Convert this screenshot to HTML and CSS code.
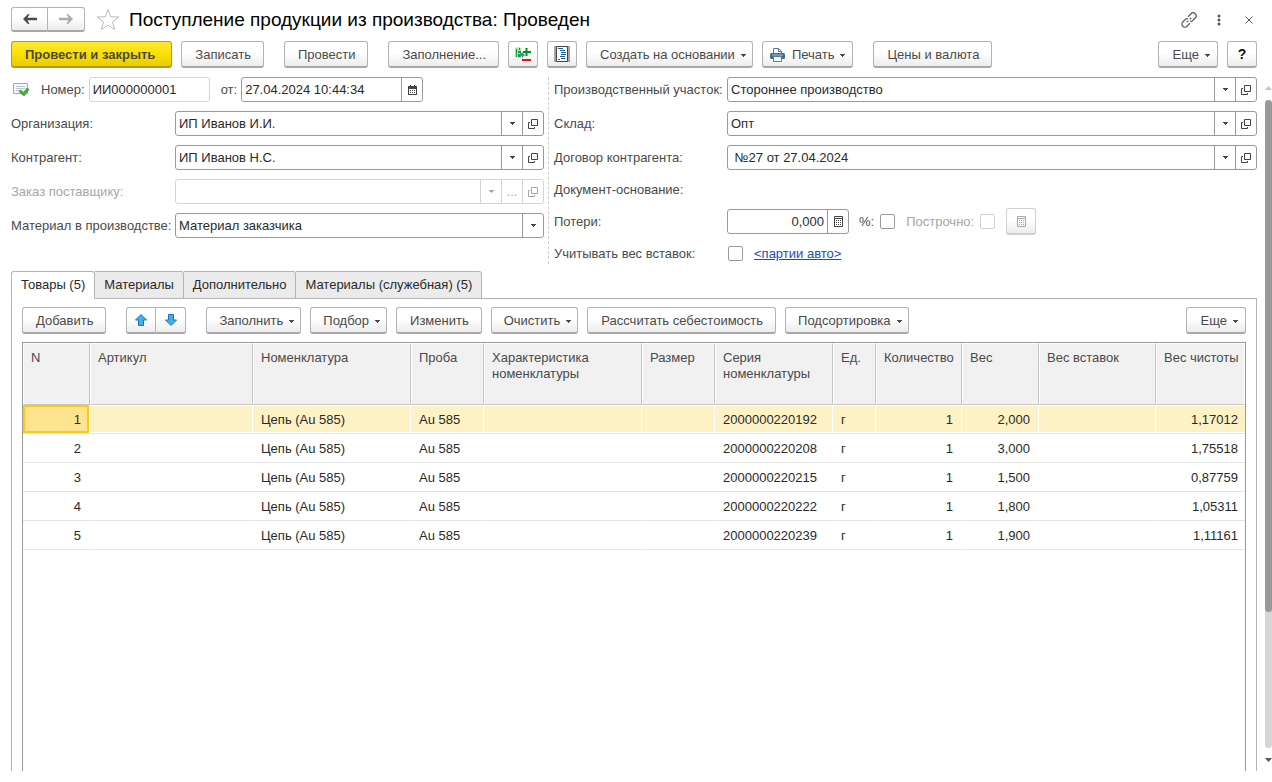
FILE: index.html
```html
<!DOCTYPE html>
<html lang="ru">
<head>
<meta charset="utf-8">
<title>Поступление продукции из производства</title>
<link rel="stylesheet" href="styles.css">
</head>
<body>
<svg class="defs" aria-hidden="true">
  <symbol id="open" viewBox="0 0 10 10"><path d="M3.500.5h6v6h-6zM2 3.500H.5v6h6V8" fill="none" stroke="currentColor"/></symbol>
  <symbol id="caret" viewBox="0 0 5 3"><path d="M0 0h5v1H4v1H3v1H2V2H1V1H0z" fill="currentColor"/></symbol>
  <symbol id="calc" viewBox="0 0 9 11"><path d="M.5.5h8v10h-8zM0 2.500h9" fill="none" stroke="currentColor"/><path d="M2 4h1v1H2zM4 4h1v1H4zM6 4h1v1H6zM2 6h1v1H2zM4 6h1v1H4zM6 6h1v1H6zM2 8h1v1H2zM4 8h1v1H4zM6 8h1v1H6z" fill="currentColor"/></symbol>
</svg>
<div class="window">
<main class="page">
  <header class="titlebar">
    <div class="pair nav">
      <button class="btn" aria-label="Назад"><svg width="14" height="10" viewBox="0 0 14 10"><path d="M0 5l5-5h1.500L4.500 3.800H14v2.400H4.500L6.500 10H5z" fill="#4a4a4a"/></svg></button>
      <button class="btn" aria-label="Вперед"><svg width="14" height="10" viewBox="0 0 14 10"><path d="M14 5L9 0H7.500l2 3.800H0v2.400h9.500l-2 3.800H9z" fill="#aaa"/></svg></button>
    </div>
    <button class="plain star" aria-label="В избранное"><svg width="24" height="23" viewBox="0 0 24 23"><path d="M12 1.500l2.700 7.300 8 .2-6.200 4.900 2.200 7.600-6.700-4.400-6.700 4.400 2.200-7.600L1.300 9l8-.2z" fill="none" stroke="#b4bcc4"/></svg></button>
    <h1>Поступление продукции из производства: Проведен</h1>
    <div class="wintools">
      <button class="plain" aria-label="Ссылка"><svg width="16" height="16" viewBox="0 0 16 16"><g fill="none" stroke="#555" stroke-width="1.200" transform="rotate(-45 8 8)"><path d="M6.500 11H2.200a3 3 0 0 1 0-6h3.600q1.600 0 2.200 1.500M9.500 5h4.300a3 3 0 0 1 0 6h-3.600q-1.600 0-2.200-1.500M5 8h2M9 8h2"/></g></svg></button>
      <button class="plain dots" aria-label="Меню"><svg width="4" height="12" viewBox="0 0 4 12"><g fill="#555"><circle cx="2" cy="2" r="1.500"/><circle cx="2" cy="6" r="1.500"/><circle cx="2" cy="10" r="1.500"/></g></svg></button>
      <button class="plain" aria-label="Закрыть"><svg width="8" height="8" viewBox="0 0 8 8"><path d="M.5.5l7 7m0-7l-7 7" stroke="#555" fill="none"/></svg></button>
    </div>
  </header>

  <div class="toolbar">
    <button class="btn primary">Провести и закрыть</button>
    <button class="btn gap-after">Записать</button>
    <button class="btn gap-after">Провести</button>
    <button class="btn">Заполнение...</button>
    <button class="btn icon" aria-label="Изменить набор"><svg width="16" height="14" viewBox="0 0 16 14"><path d="M0 1l4-1 2 1v9l-2 1-4-1z" fill="#a4eca4"/><path d="M1 2h1v8H1zM4 1h1v2H4zM3 4h3v2H3zM3 7h3v3H3z" fill="#159c32"/><path d="M5 6h2V5l3 3-3 3V9H5z" fill="#3c8fc4"/><path d="M10.500 1h2v3H16v2h-3.500v3h-2V6H8V4h2.500z" fill="#00980a"/><path d="M7 12h9v2H7z" fill="#f01010"/></svg></button>
    <button class="btn icon" aria-label="Структура"><svg width="16" height="16" viewBox="0 0 16 16"><path d="M0 0h16v16H0z" fill="#a4a4a4"/><path d="M2.500.5h11v15h-11z" fill="#fff" stroke="#444"/><path d="M4 2.500h5M6 4.500h5M7 6.500h5M7 8.500h5M6 10.500h5M7 12.500h4M4 13.500h2" stroke="#17629a" fill="none"/></svg></button>
    <button class="btn">Создать на основании<svg class="caret"><use href="#caret"/></svg></button>
    <button class="btn print gap-after"><svg width="15" height="14" viewBox="0 0 15 14"><path d="M3.500 6V.5h5l3 3V6" fill="#fff" stroke="#57799b"/><path d="M8.500.5v3h3" fill="none" stroke="#57799b"/><rect y="5" width="15" height="6" rx="1.500" fill="#3f6a92"/><path d="M2 7h11" stroke="#a9c2d8"/><path d="M3.500 8.500h8v5h-8z" fill="#fff" stroke="#57799b"/></svg>Печать<svg class="caret"><use href="#caret"/></svg></button>
    <button class="btn">Цены и валюта</button>
    <span class="spring"></span>
    <button class="btn more">Еще<svg class="caret"><use href="#caret"/></svg></button>
    <button class="btn icon help">?</button>
  </div>

  <form class="fields">
    <div class="col left">
      <div class="row number">
        <svg width="16" height="14" viewBox="0 0 16 14"><path d="M.5.5h14v10H.5z" fill="#f7f9fb" stroke="#9aabb8"/><path d="M3 3.500h9M3 5.500h9M3 7.500h4" stroke="#b9c5cf"/><path d="M6 8.500L8 7l2.500 2.500L14 5l2 1.500-5 6.500z" fill="#3fb52c" stroke="#258a1c" stroke-width=".6"/></svg>
        <label for="num">Номер:</label>
        <span class="combo pale num"><input id="num" value="ИИ000000001" readonly></span>
        <label for="date">от:</label>
        <span class="combo date"><input id="date" value="27.04.2024 10:44:34"><button type="button" aria-label="Календарь"><svg width="9" height="10" viewBox="0 0 9 10"><path d="M0 1h9v9H0z" fill="#444"/><path d="M1 4h7v5H1z" fill="#fff"/><path d="M2 0h1v2H2zM6 0h1v2H6zM2 5h1v1H2zM4 5h1v1H4zM6 5h1v1H6zM2 7h1v1H2zM4 7h1v1H4zM6 7h1v1H6z" fill="#444"/></svg></button></span>
      </div>
      <div class="row"><label for="org">Организация:</label><span class="combo"><input id="org" value="ИП Иванов И.И."><button type="button" aria-label="Выбрать"><svg class="caret"><use href="#caret"/></svg></button><button type="button" aria-label="Открыть"><svg class="open"><use href="#open"/></svg></button></span></div>
      <div class="row"><label for="contr">Контрагент:</label><span class="combo"><input id="contr" value="ИП Иванов Н.С."><button type="button" aria-label="Выбрать"><svg class="caret"><use href="#caret"/></svg></button><button type="button" aria-label="Открыть"><svg class="open"><use href="#open"/></svg></button></span></div>
      <div class="row off"><label for="order">Заказ поставщику:</label><span class="combo pale"><input id="order" disabled><button type="button" disabled aria-label="Выбрать"><svg class="caret"><use href="#caret"/></svg></button><button type="button" disabled>...</button><button type="button" disabled aria-label="Открыть"><svg class="open"><use href="#open"/></svg></button></span></div>
      <div class="row"><label for="mat">Материал в производстве:</label><span class="combo"><input id="mat" value="Материал заказчика"><button type="button" aria-label="Выбрать"><svg class="caret"><use href="#caret"/></svg></button></span></div>
    </div>
    <div class="col right">
      <div class="row"><label for="site">Производственный участок:</label><span class="combo"><input id="site" value="Стороннее производство"><button type="button" aria-label="Выбрать"><svg class="caret"><use href="#caret"/></svg></button><button type="button" aria-label="Открыть"><svg class="open"><use href="#open"/></svg></button></span></div>
      <div class="row"><label for="store">Склад:</label><span class="combo"><input id="store" value="Опт"><button type="button" aria-label="Выбрать"><svg class="caret"><use href="#caret"/></svg></button><button type="button" aria-label="Открыть"><svg class="open"><use href="#open"/></svg></button></span></div>
      <div class="row"><label for="deal">Договор контрагента:</label><span class="combo"><input id="deal" value=" №27 от 27.04.2024"><button type="button" aria-label="Выбрать"><svg class="caret"><use href="#caret"/></svg></button><button type="button" aria-label="Открыть"><svg class="open"><use href="#open"/></svg></button></span></div>
      <div class="row short"><span>Документ-основание:</span></div>
      <div class="row"><label for="loss">Потери:</label>
        <div class="inline">
          <span class="combo loss"><input id="loss" value="0,000"><button type="button" aria-label="Калькулятор"><svg class="calc"><use href="#calc"/></svg></button></span>
          <label for="pct">%:</label><input type="checkbox" id="pct">
          <label class="muted" for="lines">Построчно:</label><input type="checkbox" id="lines" disabled>
          <button type="button" class="btn icon" disabled aria-label="Рассчитать"><svg class="calc"><use href="#calc"/></svg></button>
        </div>
      </div>
      <div class="row short"><label for="ins">Учитывать вес вставок:</label><div class="inline lots"><input type="checkbox" id="ins"><a href="#">&lt;партии авто&gt;</a></div></div>
    </div>
  </form>

  <nav class="tabs" role="tablist">
    <button class="tab active" role="tab" aria-selected="true">Товары (5)</button>
    <button class="tab" role="tab">Материалы</button>
    <button class="tab" role="tab">Дополнительно</button>
    <button class="tab" role="tab">Материалы (служебная) (5)</button>
  </nav>
  <section class="panel">
    <div class="toolbar">
      <button class="btn gap-after">Добавить</button>
      <div class="pair gap-after">
        <button class="btn" aria-label="Вверх"><svg width="12" height="12" viewBox="0 0 12 12"><path d="M6 .5L11.500 6H8.500v5.500h-5V6H.5z" fill="#3fb0f0" stroke="#2274a8"/></svg></button>
        <button class="btn" aria-label="Вниз"><svg width="12" height="12" viewBox="0 0 12 12"><path d="M6 11.500L.5 6h3V.5h5V6h3z" fill="#3fb0f0" stroke="#2274a8"/></svg></button>
      </div>
      <button class="btn">Заполнить<svg class="caret"><use href="#caret"/></svg></button>
      <button class="btn">Подбор<svg class="caret"><use href="#caret"/></svg></button>
      <button class="btn">Изменить</button>
      <button class="btn">Очистить<svg class="caret"><use href="#caret"/></svg></button>
      <button class="btn">Рассчитать себестоимость</button>
      <button class="btn">Подсортировка<svg class="caret"><use href="#caret"/></svg></button>
      <span class="spring"></span>
      <button class="btn more">Еще<svg class="caret"><use href="#caret"/></svg></button>
    </div>
    <div class="grid">
      <table>
        <colgroup><col class="w-n"><col class="w-art"><col class="w-name"><col class="w-size"><col class="w-name"><col class="w-size"><col class="w-series"><col class="w-unit"><col class="w-qty"><col class="w-wt"><col class="w-ins"><col class="w-pure"></colgroup>
        <thead><tr><th>N</th><th>Артикул</th><th>Номенклатура</th><th>Проба</th><th>Характеристика номенклатуры</th><th>Размер</th><th>Серия номенклатуры</th><th>Ед.</th><th>Количество</th><th>Вес</th><th>Вес вставок</th><th>Вес чистоты</th></tr></thead>
        <tbody>
          <tr class="selected"><td class="r current">1</td><td></td><td>Цепь (Au 585)</td><td>Au 585</td><td></td><td></td><td>2000000220192</td><td>г</td><td class="r">1</td><td class="r">2,000</td><td></td><td class="r">1,17012</td></tr>
          <tr><td class="r">2</td><td></td><td>Цепь (Au 585)</td><td>Au 585</td><td></td><td></td><td>2000000220208</td><td>г</td><td class="r">1</td><td class="r">3,000</td><td></td><td class="r">1,75518</td></tr>
          <tr><td class="r">3</td><td></td><td>Цепь (Au 585)</td><td>Au 585</td><td></td><td></td><td>2000000220215</td><td>г</td><td class="r">1</td><td class="r">1,500</td><td></td><td class="r">0,87759</td></tr>
          <tr><td class="r">4</td><td></td><td>Цепь (Au 585)</td><td>Au 585</td><td></td><td></td><td>2000000220222</td><td>г</td><td class="r">1</td><td class="r">1,800</td><td></td><td class="r">1,05311</td></tr>
          <tr><td class="r">5</td><td></td><td>Цепь (Au 585)</td><td>Au 585</td><td></td><td></td><td>2000000220239</td><td>г</td><td class="r">1</td><td class="r">1,900</td><td></td><td class="r">1,11161</td></tr>
        </tbody>
      </table>
    </div>
  </section>
</main>
<aside class="scroll" aria-hidden="true">
  <svg class="up" width="7" height="4" viewBox="0 0 7 4"><path d="M0 4L3.500 0 7 4z" fill="#c4c4c4"/></svg>
  <div class="track"><div class="thumb"></div></div>
  <svg width="7" height="4" viewBox="0 0 7 4"><path d="M0 0h7L3.500 4z" fill="#555"/></svg>
</aside>
</div>
</body>
</html>
```

FILE: styles.css
```css
* { box-sizing: border-box; }
body { margin: 0; background: #fff; color: #4a4a4a; font: 13px/16px "Liberation Sans", Arial, sans-serif; }
button, input { font: inherit; color: inherit; margin: 0; }
svg { display: block; flex: none; }
.defs { position: absolute; width: 0; height: 0; }

.window { display: flex; height: 100vh; overflow: hidden; }
.page { flex: 1; min-width: 0; display: flex; flex-direction: column; padding: 7px 8px 11px 11px; }

.titlebar { display: flex; align-items: center; height: 25px; }
h1 { margin: 0 0 0 9px; flex: 1; font-size: 19px; line-height: 25px; font-weight: normal; color: #000; white-space: nowrap; }
.plain { border: 0; padding: 0; background: none; }
.star { margin-left: 11px; }
.wintools { display: flex; align-items: center; gap: 20px; padding-right: 4px; }
.dots { margin-right: 4px; }

.btn {
  display: flex; align-items: center; justify-content: center;
  height: 27px; padding: 2px 12px 0 13px; white-space: nowrap;
  border: 1px solid #b3b3b3; border-bottom: 2px solid #a8a8a8; border-radius: 3px;
  background: linear-gradient(#fff 45%, #ececec);
}
.btn:has(> .caret) { padding-left: 13px; padding-right: 6px; }
.btn .caret { margin: 1px 0 0 6px; }
.btn.icon { width: 30px; padding: 0; }
.btn.print { padding-left: 7px; padding-right: 7px; }
.btn.print svg:first-child { margin-right: 7px; }
.btn.more { padding-left: 14px; padding-right: 7px; }
.btn.primary { padding-right: 16px; font-weight: bold; background: linear-gradient(#ffe838, #fbe000 50%, #e9cc00); border-color: #b49e14; }
.btn.help { font-weight: bold; font-size: 14px; color: #111; }
.btn:disabled { color: #aaa; border-color: #d0d0d0; }
.caret { width: 5px; height: 3px; }
.open { width: 10px; height: 10px; }
.calc { width: 9px; height: 11px; }

.pair { display: flex; }
.pair .btn { width: 30px; padding: 0; }
.pair .btn:first-child { border-radius: 3px 0 0 3px; }
.pair .btn:last-child { border-left: 0; border-radius: 0 3px 3px 0; }
.pair.nav .btn { width: 37px; height: 25px; }

.toolbar { display: flex; gap: 9px; }
.gap-after { margin-right: 11px; }
.spring { flex: 1; }
.titlebar + .toolbar { margin-top: 9px; }

.fields { display: grid; grid-template-columns: 533fr 713fr; margin-top: 9px; }
.col { display: flex; flex-direction: column; gap: 9px; min-width: 0; }
.right { padding-left: 5px; margin-left: 4px; border-left: 1px dashed #ccc; }
.row { display: grid; align-items: center; align-content: center; height: 25px; }
.left .row { grid-template-columns: 164px 1fr; }
.right .row { grid-template-columns: 173px 1fr; }
.row.short { height: 21px; }
.left .row.number { display: flex; }
.number > svg { margin: 0 12px 0 2px; }
.number label { margin-right: 4px; }
.number .num { width: 121px; margin-right: 11px; }
.number .date { width: 182px; }
.off { color: #a6a6a6; }
.muted { color: #a6a6a6; }

.combo { display: flex; height: 25px; border: 1px solid #999; border-radius: 3px; background: #fff; color: #444; }
.combo input { flex: 1; min-width: 0; border: 0; padding: 0 3px; background: none; color: #2a2a2a; outline: 0; }
.combo button { width: 21px; padding: 0; border: 0; border-left: 1px solid #999; background: none; display: flex; align-items: center; justify-content: center; }
.combo.pale, .combo.pale button { border-color: #d4d4d4; }
.off .combo { color: #a6a6a6; }
.combo.loss { width: 122px; margin-right: 10px; }
.loss input { text-align: right; }
.inline { display: flex; align-items: center; }
.inline label { margin-right: 6px; }
.inline input[type="checkbox"] { margin-right: 11px; }
.inline.lots input { margin-left: 1px; }
input[type="checkbox"] { appearance: none; flex: none; width: 15px; height: 15px; border: 1px solid #999; border-radius: 2px; background: #fff; }
input[type="checkbox"]:disabled { border-color: #d0d0d0; }
a { color: #1a4fb5; }

.tabs { display: flex; margin-top: 7px; }
.tab { height: 28px; padding: 0 9px; border: 1px solid #b3b3b3; border-left: 0; background: #ebebeb; color: #2a2a2a; border-radius: 0 3px 0 0; white-space: nowrap; }
.tab.active { background: #fff; border-left: 1px solid #b3b3b3; border-bottom-color: #fff; border-radius: 3px 3px 0 0; position: relative; }
.panel { flex: 1; min-height: 0; display: flex; flex-direction: column; margin-top: -1px; padding: 8px 10px 0; border: 1px solid #b3b3b3; border-bottom: 0; }

.panel .btn:has(> .caret):not(.more) { padding-left: 12px; }
.grid { flex: 1; min-height: 0; margin-top: 8px; border: 1px solid #999; border-bottom: 0; overflow: hidden; }
table { width: 100%; table-layout: fixed; border-collapse: separate; border-spacing: 0; }
th { height: 62px; padding: 6px 5px 0 7px; text-align: left; vertical-align: top; font-weight: normal; background: #f1f1f1; border: 1px solid #fff; border-right-color: #c6c6c6; border-bottom-color: #c6c6c6; }
th:last-child { border-right-color: #fff; }
td { height: 29px; padding: 2px 8px 0; border-right: 1px solid transparent; border-bottom: 1px solid #e4e4e4; color: #2a2a2a; white-space: nowrap; }
td:last-child { border-right: 0; padding-right: 7px; }
.r { text-align: right; }
.selected td { background: #fdf1c6; background-clip: padding-box; box-shadow: inset 0 1px #fff, inset 0 -1px #fff; border-right-color: #fff; }
.selected td.current { background: #ffe48f; box-shadow: inset 0 0 0 2px #fcc81e; }
.w-n { width: 67px; } .w-art { width: 163px; } .w-name { width: 158px; } .w-size { width: 73px; }
.w-series { width: 118px; } .w-unit { width: 43px; } .w-qty { width: 86px; } .w-wt { width: 77px; }
.w-ins { width: 117px; } .w-pure { width: 89px; }

.scroll { width: 7px; display: flex; flex-direction: column; align-items: center; padding: 86px 0 20px; }
.track { flex: 1; width: 7px; margin: 10px 0; border-radius: 4px; background: #d5d5d5; }
.thumb { height: 79%; border-radius: 4px; background: #999; }
```
